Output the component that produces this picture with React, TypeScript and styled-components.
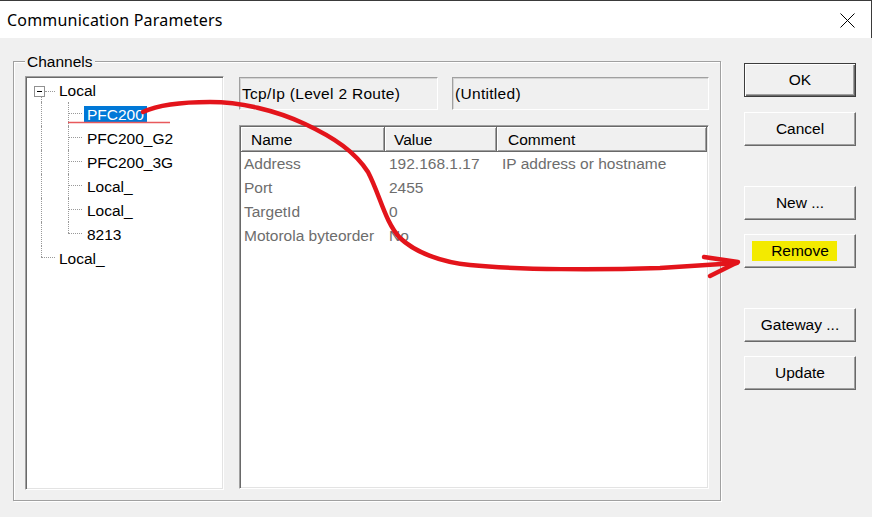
import React from "react";
import styled, { createGlobalStyle } from "styled-components";

const Global = createGlobalStyle`
  html, body { margin: 0; padding: 0; background: #f0f0f0; }
  body { font-family: "Liberation Sans", Arial, sans-serif; }
`;

const Dialog = styled.div`
  position: relative;
  width: 872px;
  height: 517px;
  background: #f0f0f0;
  display: flex;
  flex-direction: column;
  overflow: hidden;
`;

const TitleBar = styled.div`
  height: 38px;
  flex-shrink: 0;
  box-sizing: border-box;
  background: #fff;
  border-top: 1px solid #3a3a3a;
  border-right: 1px solid #3a3a3a;
  display: flex;
  align-items: center;
  justify-content: space-between;
  padding: 1px 16px 0 7px;
`;

const TitleText = styled.span`
  font-family: "Noto Sans", "Liberation Sans", sans-serif;
  font-size: 16px;
  letter-spacing: 0.2px;
  color: #000;
`;

const CloseIcon = styled.svg`
  display: block;
`;

const Body = styled.div`
  display: flex;
  align-items: flex-start;
  padding-left: 13px;
  font-size: 15.5px;
  color: #000;
`;

const GroupBox = styled.div`
  position: relative;
  box-sizing: border-box;
  width: 708px;
  height: 440px;
  margin-top: 23px;
  border: 1px solid #a0a0a0;
  box-shadow: inset 1px 1px 0 #fff, 1px 1px 0 #fff;
  padding: 14px 11px 10px 11px;
  display: flex;
  gap: 15px;
`;

const GroupCaption = styled.span`
  position: absolute;
  left: 11px;
  top: -9px;
  padding: 0 2px;
  line-height: 18px;
  background: #f0f0f0;
`;

const TreePanel = styled.div`
  box-sizing: border-box;
  width: 199px;
  height: 414px;
  background: #fff;
  border: 1px solid;
  border-color: #a0a0a0 #fff #fff #a0a0a0;
  box-shadow: inset 1px 1px 0 #696969, inset -1px -1px 0 #e3e3e3;
  padding: 1px;
  display: flex;
  flex-direction: column;
`;

const TreeRow = styled.div`
  display: flex;
  height: 24px;
  line-height: 24px;
`;

type VMode = "none" | "full" | "top" | "below";

const Guide = styled.span<{
  $w: number;
  $x: number;
  $v: VMode;
  $hy?: number;
  $h0?: number;
  $h1?: number;
  $padL?: number;
}>`
  position: relative;
  flex-shrink: 0;
  width: ${(p) => p.$w}px;
  display: flex;
  align-items: flex-start;
  padding-left: ${(p) => p.$padL ?? 0}px;
  padding-top: 8px;
  box-sizing: border-box;
  &::before {
    content: "";
    display: ${(p) => (p.$v === "none" ? "none" : "block")};
    position: absolute;
    left: ${(p) => p.$x}px;
    top: ${(p) => (p.$v === "below" ? 19 : 0)}px;
    ${(p) => (p.$v === "top" ? `height: ${p.$hy ?? 12}px;` : "bottom: 0;")}
    border-left: 1px dotted #999;
  }
  &::after {
    content: "";
    display: ${(p) => (p.$h0 === undefined ? "none" : "block")};
    position: absolute;
    top: ${(p) => p.$hy ?? 12}px;
    left: ${(p) => p.$h0 ?? 0}px;
    width: ${(p) => (p.$h1 ?? 0) - (p.$h0 ?? 0)}px;
    border-top: 1px dotted #999;
  }
`;

const ExpandBox = styled.span`
  position: relative;
  box-sizing: border-box;
  width: 11px;
  height: 11px;
  border: 1px solid #919191;
  background: #fff;
  &::after {
    content: "";
    position: absolute;
    left: 2px;
    top: 4px;
    width: 5px;
    border-top: 1px solid #000;
  }
`;

const NodeLabel = styled.span<{ $selected?: boolean }>`
  align-self: center;
  height: 17px;
  line-height: 17px;
  padding: 0 3px;
  white-space: nowrap;
  background: ${(p) => (p.$selected ? "#0078d7" : "transparent")};
  color: ${(p) => (p.$selected ? "#fff" : "#000")};
`;

const RightPane = styled.div`
  width: 470px;
  margin-top: 1px;
  display: flex;
  flex-direction: column;
  gap: 15px;
`;

const InfoRow = styled.div`
  display: flex;
  justify-content: space-between;
  height: 33px;
`;

const InfoField = styled.div<{ $w: number }>`
  box-sizing: border-box;
  width: ${(p) => p.$w}px;
  height: 33px;
  border: 1px solid;
  border-color: #a0a0a0 #fff #fff #a0a0a0;
  box-shadow: inset 1px 1px 0 #d4d4d4;
  padding-left: 2px;
  display: flex;
  align-items: center;
  background: #f0f0f0;
  letter-spacing: 0.3px;
`;

const Table = styled.div`
  box-sizing: border-box;
  height: 364px;
  background: #fff;
  border: 1px solid;
  border-color: #a0a0a0 #fff #fff #a0a0a0;
  box-shadow: inset 1px 1px 0 #696969, inset -1px -1px 0 #e3e3e3;
  padding: 1px;
`;

const GridRow = styled.div<{ $h: number }>`
  display: grid;
  grid-template-columns: 144px 112px 1fr;
  height: ${(p) => p.$h}px;
`;

const HeaderCell = styled.div<{ $pad: number }>`
  box-sizing: border-box;
  background: #f0f0f0;
  box-shadow: inset -1px -1px 0 #696969, inset 1px 1px 0 #fff,
    inset -2px -2px 0 #a0a0a0;
  padding-left: ${(p) => p.$pad}px;
  display: flex;
  align-items: center;
  white-space: nowrap;
`;

const DataCell = styled.div<{ $pad: number }>`
  padding-left: ${(p) => p.$pad}px;
  line-height: 24px;
  color: #6d6d6d;
  white-space: nowrap;
  overflow: hidden;
`;

const ButtonColumn = styled.div`
  display: flex;
  flex-direction: column;
  margin-left: 23px;
  margin-top: 25px;
`;

const Button = styled.button<{ $default?: boolean; $mt: number }>`
  box-sizing: border-box;
  width: 112px;
  height: 34px;
  margin-top: ${(p) => p.$mt}px;
  padding: 0;
  font-family: "Liberation Sans", Arial, sans-serif;
  font-size: 15.5px;
  color: #000;
  background: #f0f0f0;
  border: 1px solid;
  border-color: ${(p) =>
    p.$default ? "#3c3c3c" : "#fff #696969 #696969 #fff"};
  box-shadow: ${(p) =>
    p.$default
      ? "inset 1px 1px 0 #fff, inset -1px -1px 0 #696969, inset -2px -2px 0 #a0a0a0"
      : "inset -1px -1px 0 #a0a0a0"};
`;

const Marker = styled.span`
  display: inline-block;
  background: #f3ea00;
  line-height: 20px;
  padding: 0 8px 0 19px;
  margin-right: 11px;
`;

const Annotation = styled.svg`
  position: absolute;
  left: 0;
  top: 0;
  pointer-events: none;
`;

const columns = [
  { head: "Name", hpad: 10, dpad: 3 },
  { head: "Value", hpad: 9, dpad: 4 },
  { head: "Comment", hpad: 11, dpad: 5 },
];

const params = [
  ["Address", "192.168.1.17", "IP address or hostname"],
  ["Port", "2455", ""],
  ["TargetId", "0", ""],
  ["Motorola byteorder", "No", ""],
];

const children = ["PFC200", "PFC200_G2", "PFC200_3G", "Local_", "Local_", "8213"];

export default function App() {
  return (
    <>
      <Global />
      <Dialog>
        <TitleBar>
          <TitleText>Communication Parameters</TitleText>
          <CloseIcon width="15" height="15" viewBox="0 0 15 15">
            <path d="M0.5 0.5 L14.5 14.5 M14.5 0.5 L0.5 14.5" stroke="#000" strokeWidth="1" />
          </CloseIcon>
        </TitleBar>
        <Body>
          <GroupBox>
            <GroupCaption>Channels</GroupCaption>
            <TreePanel>
              <TreeRow>
                <Guide $w={29} $x={14} $v="below" $hy={13} $h0={18} $h1={28} $padL={7}>
                  <ExpandBox />
                </Guide>
                <NodeLabel>Local</NodeLabel>
              </TreeRow>
              {children.map((c, i) => (
                <TreeRow key={i}>
                  <Guide $w={29} $x={14} $v="full" />
                  <Guide
                    $w={28}
                    $x={12}
                    $v={i === children.length - 1 ? "top" : "full"}
                    $hy={11}
                    $h0={12}
                    $h1={26}
                  />
                  <NodeLabel $selected={i === 0}>{c}</NodeLabel>
                </TreeRow>
              ))}
              <TreeRow>
                <Guide $w={29} $x={14} $v="top" $hy={11} $h0={14} $h1={28} />
                <NodeLabel>Local_</NodeLabel>
              </TreeRow>
            </TreePanel>
            <RightPane>
              <InfoRow>
                <InfoField $w={199}>Tcp/Ip (Level 2 Route)</InfoField>
                <InfoField $w={257}>(Untitled)</InfoField>
              </InfoRow>
              <Table>
                <GridRow $h={25}>
                  {columns.map((c) => (
                    <HeaderCell key={c.head} $pad={c.hpad}>
                      {c.head}
                    </HeaderCell>
                  ))}
                </GridRow>
                {params.map((row) => (
                  <GridRow $h={24} key={row[0]}>
                    {row.map((v, j) => (
                      <DataCell key={j} $pad={columns[j].dpad}>
                        {v}
                      </DataCell>
                    ))}
                  </GridRow>
                ))}
              </Table>
            </RightPane>
          </GroupBox>
          <ButtonColumn>
            <Button $default $mt={0}>OK</Button>
            <Button $mt={15}>Cancel</Button>
            <Button $mt={40}>New ...</Button>
            <Button $mt={14}>
              <Marker>Remove</Marker>
            </Button>
            <Button $mt={40}>Gateway ...</Button>
            <Button $mt={14}>Update</Button>
          </ButtonColumn>
        </Body>
        <Annotation width="872" height="517" viewBox="0 0 872 517">
          <path d="M68 122.5 H170" stroke="#e8595c" strokeWidth="1.5" fill="none" />
          <path
            d="M143 112 C160 104 185 102 210 102 C240 102 275 110 305 124 C335 138 355 152 368 172 C380 195 385 222 400 238 C415 252 440 262 470 265 C520 270 600 270 660 268 L737 263"
            stroke="#e3141b"
            strokeWidth="4.5"
            fill="none"
            strokeLinecap="round"
            strokeLinejoin="round"
          />
          <path
            d="M704 257 L738 262 L710 276"
            stroke="#e3141b"
            strokeWidth="4.5"
            fill="none"
            strokeLinecap="round"
            strokeLinejoin="round"
          />
        </Annotation>
      </Dialog>
    </>
  );
}
